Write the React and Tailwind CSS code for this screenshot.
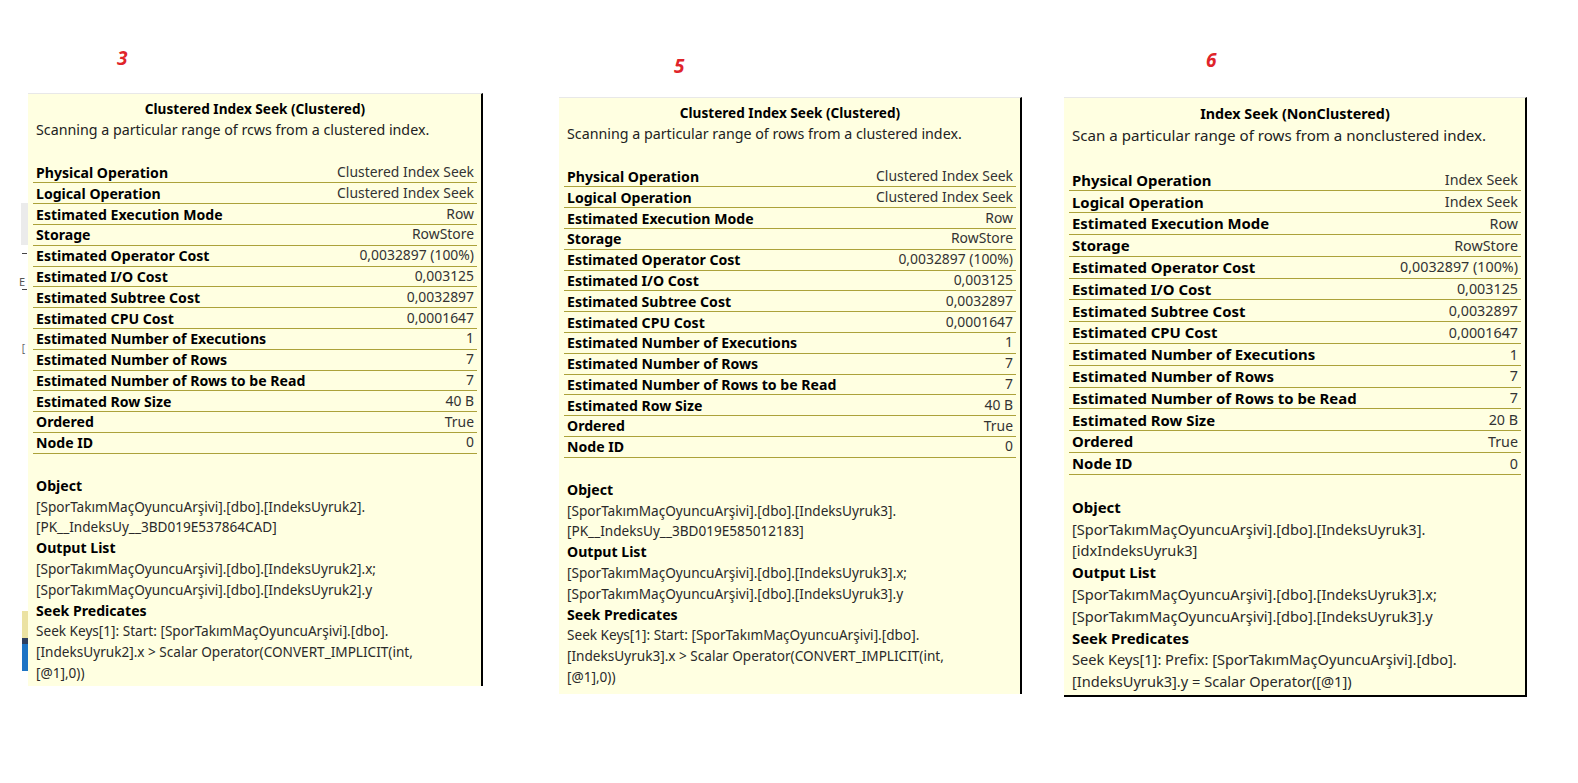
const FONT = { fontFamily: '"Noto Sans", "Open Sans", sans-serif' }

const clusteredRows = (size) => [
  ['Physical Operation', 'Clustered Index Seek'],
  ['Logical Operation', 'Clustered Index Seek'],
  ['Estimated Execution Mode', 'Row'],
  ['Storage', 'RowStore'],
  ['Estimated Operator Cost', '0,0032897 (100%)'],
  ['Estimated I/O Cost', '0,003125'],
  ['Estimated Subtree Cost', '0,0032897'],
  ['Estimated CPU Cost', '0,0001647'],
  ['Estimated Number of Executions', '1'],
  ['Estimated Number of Rows', '7'],
  ['Estimated Number of Rows to be Read', '7'],
  ['Estimated Row Size', size],
  ['Ordered', 'True'],
  ['Node ID', '0'],
]

const indexRows = [
  ['Physical Operation', 'Index Seek'],
  ['Logical Operation', 'Index Seek'],
  ...clusteredRows('20 B').slice(2),
]

const sections = (tbl, objName, pred) => [
  {
    title: 'Object',
    lines: [`[SporTakımMaçOyuncuArşivi].[dbo].[${tbl}].`, `[${objName}]`],
  },
  {
    title: 'Output List',
    lines: [
      `[SporTakımMaçOyuncuArşivi].[dbo].[${tbl}].x;`,
      `[SporTakımMaçOyuncuArşivi].[dbo].[${tbl}].y`,
    ],
  },
  { title: 'Seek Predicates', lines: pred },
]

// sizes for the two tooltip scales in the shot
const SMALL = {
  rowH: 'h-[20.8px]', lineH: 'leading-[20.8px]',
  title: 'text-[13.6px]', desc: 'text-[14.25px]', key: 'text-[14.1px]', val: 'text-[13.9px]', body: 'text-[13.6px]',
  gapTop: 'mt-[22px]', gapBottom: 'mt-[22px]',
}
const BIG = {
  rowH: 'h-[21.8px]', lineH: 'leading-[21.8px]',
  title: 'text-[14.3px]', desc: 'text-[15.1px]', key: 'text-[14.9px]', val: 'text-[14.3px]', body: 'text-[14.6px]',
  gapTop: 'mt-[23px]', gapBottom: 'mt-[22px]',
}

function Tooltip({ title, desc, rows, secs, big, className }) {
  const s = big ? BIG : SMALL
  return (
    <div className={`bg-[#ffffe1] border-t border-t-[#e8e8e8] pl-[5px] pr-[4px] ${className}`} style={FONT}>
      <div className={`text-center font-bold text-black pt-[5px] ${s.title} ${s.lineH}`}>{title}</div>
      <div className={`px-[3px] text-[#222] whitespace-nowrap ${s.desc} ${s.lineH}`}>{desc}</div>
      <div className={s.gapTop}>
        {rows.map(([k, v]) => (
          <div key={k} className={`flex items-center justify-between px-[3px] border-b border-[#aca23a] ${s.rowH}`}>
            <span className={`font-bold text-black ${s.key}`}>{k}</span>
            <span className={`text-[#333] ${s.val}`}>{v}</span>
          </div>
        ))}
      </div>
      <div className={`px-[3px] ${s.gapBottom} ${s.lineH}`}>
        {secs.map((sec) => (
          <div key={sec.title}>
            <div className={`font-bold text-black ${s.key}`}>{sec.title}</div>
            {sec.lines.map((l) => (
              <div key={l} className={`text-[#2a2a2a] whitespace-nowrap ${s.body}`}>{l}</div>
            ))}
          </div>
        ))}
      </div>
    </div>
  )
}

function Num({ children, className }) {
  return (
    <div className={`text-[19px] leading-[20px] font-bold italic text-[#e0242a] ${className}`} style={FONT}>
      {children}
    </div>
  )
}

export default function App() {
  return (
    <div className="w-[1578px] h-[783px] bg-white flex items-start overflow-hidden">
      {/* scraps of the window behind */}
      <div className="w-[28px] flex flex-col items-end pt-[203px]">
        <div className="w-[7px] h-[42px] bg-[#ebebeb]" />
        <div className="w-[5px] h-[1px] bg-[#444] mt-[8px] mr-[1px]" />
        <div className="text-[11px] leading-[12px] text-[#555] mt-[22px] mr-[3px]" style={FONT}>E</div>
        <div className="w-[5px] h-[1px] bg-[#444] mt-[1px] mr-[1px]" />
        <div className="text-[10px] leading-[10px] text-[#666] mt-[53px] mr-[3px]" style={FONT}>[</div>
        <div className="w-[6px] h-[27px] bg-[#ebe2a2] mt-[258px]" />
        <div className="w-[6px] h-[6px] bg-[#2d3f5f]" />
        <div className="w-[6px] h-[27px] bg-[#1d74c4]" />
      </div>

      <div className="flex flex-col">
        <Num className="mt-[48px] ml-[89px]">3</Num>
        <Tooltip
          className="mt-[25px] w-[455px] h-[593px] border-r-2 border-r-black"
          title="Clustered Index Seek (Clustered)"
          desc="Scanning a particular range of rcws from a clustered index."
          rows={clusteredRows('40 B')}
          secs={sections('IndeksUyruk2', 'PK__IndeksUy__3BD019E537864CAD', [
            'Seek Keys[1]: Start: [SporTakımMaçOyuncuArşivi].[dbo].',
            '[IndeksUyruk2].x > Scalar Operator(CONVERT_IMPLICIT(int,',
            '[@1],0))',
          ])}
        />
      </div>

      <div className="flex flex-col ml-[76px]">
        <Num className="mt-[56px] ml-[115px]">5</Num>
        <Tooltip
          className="mt-[21px] w-[463px] h-[597px] border-r-2 border-r-black"
          title="Clustered Index Seek (Clustered)"
          desc="Scanning a particular range of rows from a clustered index."
          rows={clusteredRows('40 B')}
          secs={sections('IndeksUyruk3', 'PK__IndeksUy__3BD019E585012183', [
            'Seek Keys[1]: Start: [SporTakımMaçOyuncuArşivi].[dbo].',
            '[IndeksUyruk3].x > Scalar Operator(CONVERT_IMPLICIT(int,',
            '[@1],0))',
          ])}
        />
      </div>

      <div className="flex flex-col ml-[42px]">
        <Num className="mt-[50px] ml-[142px]">6</Num>
        <Tooltip
          big
          className="mt-[27px] w-[463px] h-[600px] border-r-2 border-b-2 border-r-black border-b-black"
          title="Index Seek (NonClustered)"
          desc="Scan a particular range of rows from a nonclustered index."
          rows={indexRows}
          secs={sections('IndeksUyruk3', 'idxIndeksUyruk3', [
            'Seek Keys[1]: Prefix: [SporTakımMaçOyuncuArşivi].[dbo].',
            '[IndeksUyruk3].y = Scalar Operator([@1])',
          ])}
        />
      </div>
    </div>
  )
}
